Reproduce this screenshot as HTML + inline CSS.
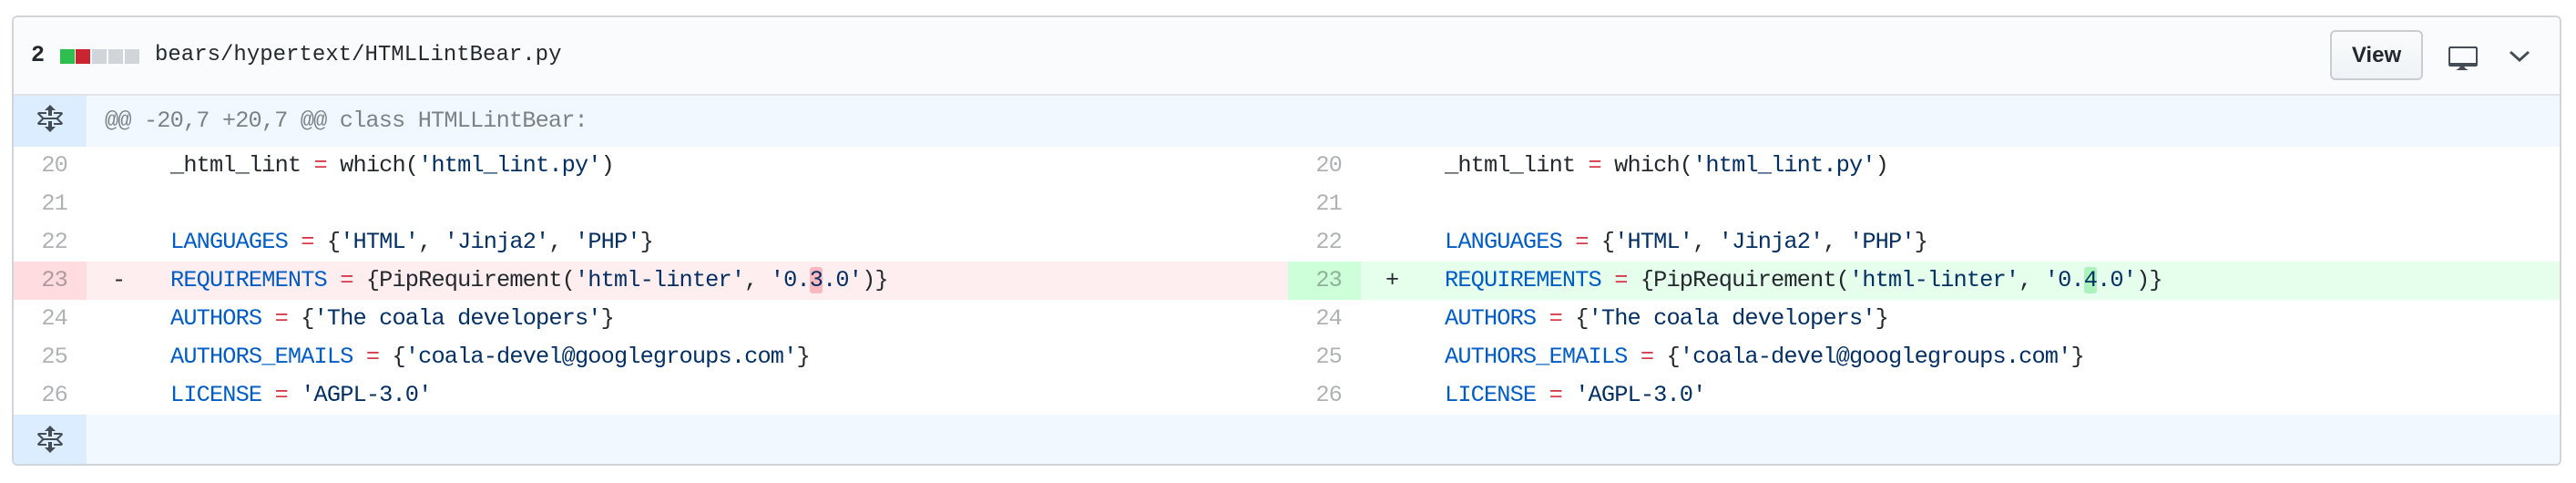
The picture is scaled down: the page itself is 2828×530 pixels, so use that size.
<!DOCTYPE html>
<html><head><meta charset="utf-8"><style>
*{margin:0;padding:0;box-sizing:border-box}
body{width:2828px;height:530px;background:#fff;position:relative;overflow:hidden;font-family:"Liberation Mono",monospace}
.box{position:absolute;left:13px;top:17px;width:2799px;height:494px;border:2px solid #d1d5da;border-radius:6px;overflow:hidden;background:#fff}
.hdr{position:absolute;left:0;top:0;width:100%;height:86px;background:#fafbfc;border-bottom:2px solid #e1e4e8}
.row{position:absolute;height:42px;line-height:42px;font-size:25.3px;letter-spacing:-0.86px;white-space:pre;color:#24292e}
.num{position:absolute;width:80px;text-align:right;padding-right:21px;color:rgba(27,31,35,.35)}
.k{color:#005cc5}.o{color:#d73a49}.s{color:#032f62}
.sq{position:absolute;top:35px;width:16px;height:16px}
</style></head><body>
<div class="box">
<div class="hdr">
 <div style="position:absolute;left:19px;top:22px;font:bold 25px/40px 'Liberation Mono',monospace;color:#24292e">2</div>
 <div class="sq" style="left:51px;background:#2cbe4e"></div>
 <div class="sq" style="left:68px;background:#cb2431"></div>
 <div class="sq" style="left:86px;background:#d1d5da"></div>
 <div class="sq" style="left:104px;background:#d1d5da"></div>
 <div class="sq" style="left:122px;background:#d1d5da"></div>
 <div style="position:absolute;left:155px;top:22px;font:24px/40px 'Liberation Mono',monospace;color:#24292e">bears/hypertext/HTMLLintBear.py</div>
 <div style="position:absolute;left:2543px;top:14px;width:102px;height:55px;border:2px solid #c9cdd2;border-radius:6px;background:linear-gradient(#fafbfc,#eff3f6);font:bold 24px/51px 'Liberation Sans',sans-serif;color:#24292e;text-align:center">View</div>
 <svg style="position:absolute;left:2673px;top:28px" width="32" height="32" viewBox="0 0 16 16"><path fill="#444d56" d="M15 2H1c-.55 0-1 .45-1 1v9c0 .55.45 1 1 1h5.34c-.25.61-.86 1.39-2.34 2h7c-1.480-.61-2.09-1.39-2.34-2H15c.55 0 1-.45 1-1V3c0-.55-.45-1-1-1zm0 9H1V3h14v8z"/></svg>
 <svg style="position:absolute;left:2740px;top:34px" width="22" height="16" viewBox="0 0 11 8"><path fill="#444d56" d="M1 1.5L0 2.5l5.5 5 5.5-5-1-1-4.5 4z"/></svg>
</div>
<div style="position:absolute;left:0;top:86px;width:100%;height:56px;background:#f1f8ff"></div>
<div style="position:absolute;left:0;top:86px;width:80px;height:56px;background:#dbedff"></div>
<svg style="position:absolute;left:26px;top:96px" width="28" height="32" viewBox="0 0 14 16"><path fill="#444d56" d="M11.5 7.5L14 10c0 .55-.45 1-1 1H9v-1h3.5l-2-2h-7l-2 2H5v1H1c-.55 0-1-.45-1-1l2.5-2.5L0 5c0-.55.45-1 1-1h4v1H1.5l2 2h7l2-2H9V4h4c.55 0 1 .45 1 1l-2.5 2.5zM6 6h2V3h2L7 0 4 3h2v3zm2 3H6v3H4l3 3 3-3H8V9z"/></svg>
<div class="row" style="left:100px;top:93px;color:rgba(27,31,35,.55)">@@ -20,7 +20,7 @@ class HTMLLintBear:</div>

<div style="position:absolute;left:0;top:268px;width:1399px;height:42px;background:#ffeef0"></div>
<div style="position:absolute;left:0;top:268px;width:80px;height:42px;background:#ffdce0"></div>
<div style="position:absolute;left:1399px;top:268px;width:1400px;height:42px;background:#e6ffed"></div>
<div style="position:absolute;left:1399px;top:268px;width:80px;height:42px;background:#cdffd8"></div>

<div class="row" style="left:0;top:142px"><span class="num">20</span></div>
<div class="row" style="left:172px;top:142px">_html_lint <span class="o">=</span> which(<span class="s">'html_lint.py'</span>)</div>
<div class="row" style="left:0;top:184px"><span class="num">21</span></div>
<div class="row" style="left:0;top:226px"><span class="num">22</span></div>
<div class="row" style="left:172px;top:226px"><span class="k">LANGUAGES</span> <span class="o">=</span> {<span class="s">'HTML'</span>, <span class="s">'Jinja2'</span>, <span class="s">'PHP'</span>}</div>
<div class="row" style="left:0;top:268px"><span class="num">23</span></div>
<div class="row" style="left:108px;top:268px">-</div>
<div class="row" style="left:172px;top:268px"><span class="k">REQUIREMENTS</span> <span class="o">=</span> {PipRequirement(<span class="s">'html-linter'</span>, <span class="s">'0.<span style="background:#fdb8c0;border-radius:3px">3</span>.0'</span>)}</div>
<div class="row" style="left:0;top:310px"><span class="num">24</span></div>
<div class="row" style="left:172px;top:310px"><span class="k">AUTHORS</span> <span class="o">=</span> {<span class="s">'The coala developers'</span>}</div>
<div class="row" style="left:0;top:352px"><span class="num">25</span></div>
<div class="row" style="left:172px;top:352px"><span class="k">AUTHORS_EMAILS</span> <span class="o">=</span> {<span class="s">'coala-devel@googlegroups.com'</span>}</div>
<div class="row" style="left:0;top:394px"><span class="num">26</span></div>
<div class="row" style="left:172px;top:394px"><span class="k">LICENSE</span> <span class="o">=</span> <span class="s">'AGPL-3.0'</span></div>

<div class="row" style="left:1399px;top:142px"><span class="num">20</span></div>
<div class="row" style="left:1571px;top:142px">_html_lint <span class="o">=</span> which(<span class="s">'html_lint.py'</span>)</div>
<div class="row" style="left:1399px;top:184px"><span class="num">21</span></div>
<div class="row" style="left:1399px;top:226px"><span class="num">22</span></div>
<div class="row" style="left:1571px;top:226px"><span class="k">LANGUAGES</span> <span class="o">=</span> {<span class="s">'HTML'</span>, <span class="s">'Jinja2'</span>, <span class="s">'PHP'</span>}</div>
<div class="row" style="left:1399px;top:268px"><span class="num">23</span></div>
<div class="row" style="left:1506px;top:268px">+</div>
<div class="row" style="left:1571px;top:268px"><span class="k">REQUIREMENTS</span> <span class="o">=</span> {PipRequirement(<span class="s">'html-linter'</span>, <span class="s">'0.<span style="background:#acf2bd;border-radius:3px">4</span>.0'</span>)}</div>
<div class="row" style="left:1399px;top:310px"><span class="num">24</span></div>
<div class="row" style="left:1571px;top:310px"><span class="k">AUTHORS</span> <span class="o">=</span> {<span class="s">'The coala developers'</span>}</div>
<div class="row" style="left:1399px;top:352px"><span class="num">25</span></div>
<div class="row" style="left:1571px;top:352px"><span class="k">AUTHORS_EMAILS</span> <span class="o">=</span> {<span class="s">'coala-devel@googlegroups.com'</span>}</div>
<div class="row" style="left:1399px;top:394px"><span class="num">26</span></div>
<div class="row" style="left:1571px;top:394px"><span class="k">LICENSE</span> <span class="o">=</span> <span class="s">'AGPL-3.0'</span></div>

<div style="position:absolute;left:0;top:436px;width:100%;height:58px;background:#f1f8ff"></div>
<div style="position:absolute;left:0;top:436px;width:80px;height:58px;background:#dbedff"></div>
<svg style="position:absolute;left:26px;top:448px" width="28" height="32" viewBox="0 0 14 16"><path fill="#444d56" d="M11.5 7.5L14 10c0 .55-.45 1-1 1H9v-1h3.5l-2-2h-7l-2 2H5v1H1c-.55 0-1-.45-1-1l2.5-2.5L0 5c0-.55.45-1 1-1h4v1H1.5l2 2h7l2-2H9V4h4c.55 0 1 .45 1 1l-2.5 2.5zM6 6h2V3h2L7 0 4 3h2v3zm2 3H6v3H4l3 3 3-3H8V9z"/></svg>
</div>
</body></html>
